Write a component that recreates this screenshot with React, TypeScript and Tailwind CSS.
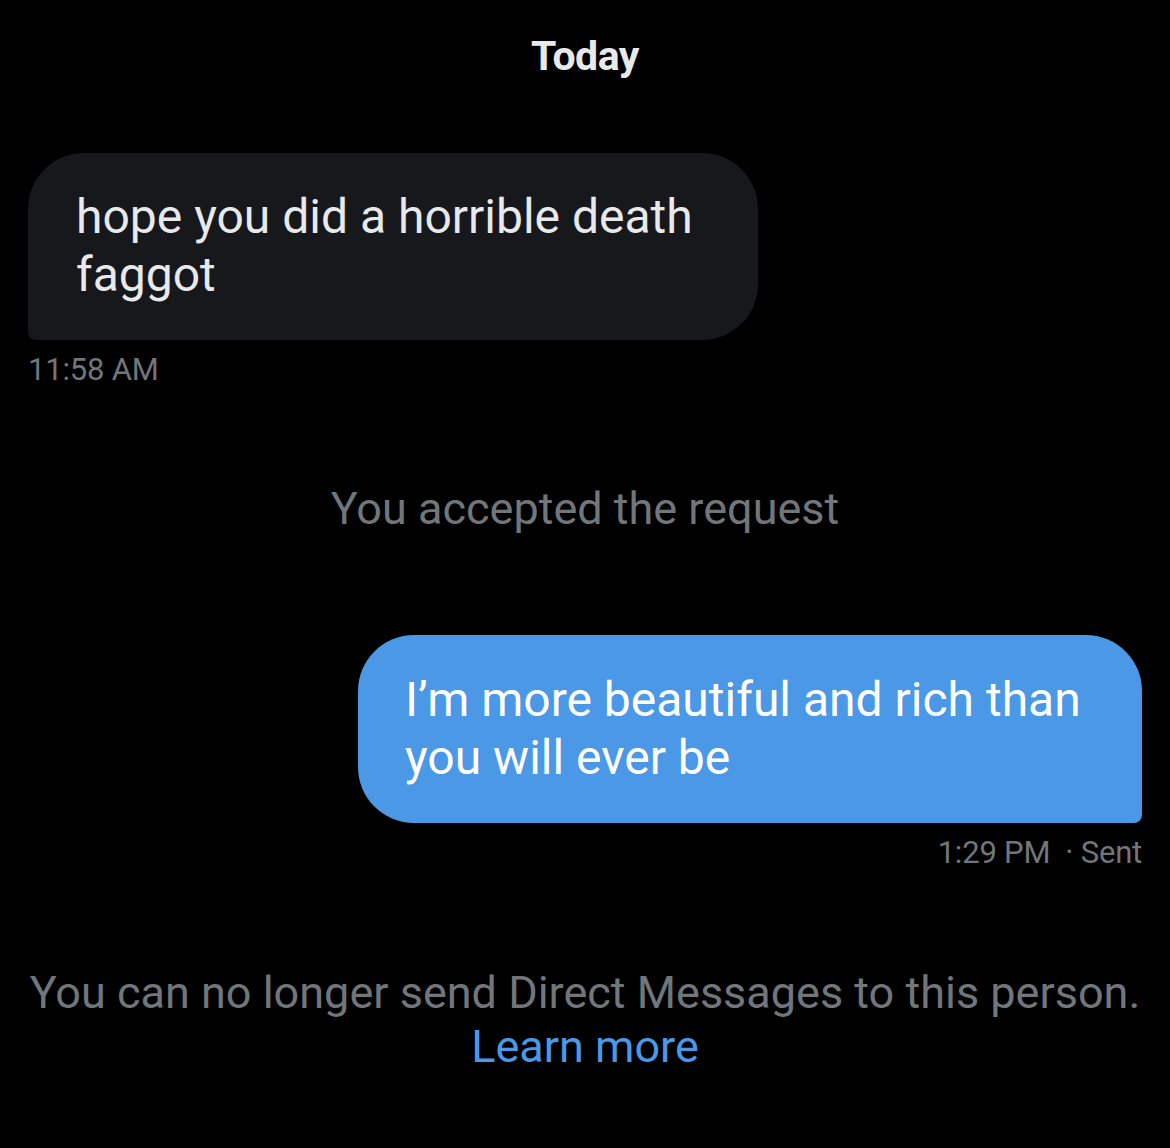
import React from "react";

export default function App() {
  const font = { fontFamily: "Roboto, 'Liberation Sans', sans-serif" };
  return (
    <div className="w-[1170px] h-[1148px] bg-black overflow-hidden" style={font}>
      <div className="flex flex-col px-[28px]">
        <div className="h-[40px] mt-[37px] flex items-center justify-center text-[41px] font-bold text-[#e7e9ea] tracking-[-0.5px]">
          Today
        </div>
        <div className="mt-[76px] w-[730px] h-[187px] bg-[#16181c] rounded-[56px] rounded-bl-[8px] pl-[48px] pt-[35px] text-[48px] leading-[58px] text-[#e7e9ea]">
          hope you did a horrible death
          <br />
          faggot
        </div>
        <div className="mt-[12px] h-[36px] flex items-center text-[31px] text-[#71767b] tracking-[-0.2px]">
          11:58 AM
        </div>
        <div className="mt-[97px] h-[48px] flex items-center justify-center text-[45px] text-[#71767b]">
          You accepted the request
        </div>
        <div className="self-end mt-[102px] w-[784px] h-[188px] bg-[#4a98e6] rounded-[56px] rounded-br-[8px] pl-[47px] pt-[36px] text-[48px] leading-[58px] text-white">
          I’m more beautiful and rich than
          <br />
          you will ever be
        </div>
        <div className="self-end mt-[12px] h-[36px] flex items-center text-[31px] text-[#71767b] tracking-[-0.2px] whitespace-pre">
          {"1:29 PM  · Sent"}
        </div>
        <div className="mt-[98px] h-[48px] flex items-center justify-center text-[45px] text-[#71767b] whitespace-nowrap">
          You can no longer send Direct Messages to this person.
        </div>
        <div className="mt-[6px] h-[48px] flex items-center justify-center text-[45px] text-[#4a99e9]">
          Learn more
        </div>
      </div>
    </div>
  );
}
